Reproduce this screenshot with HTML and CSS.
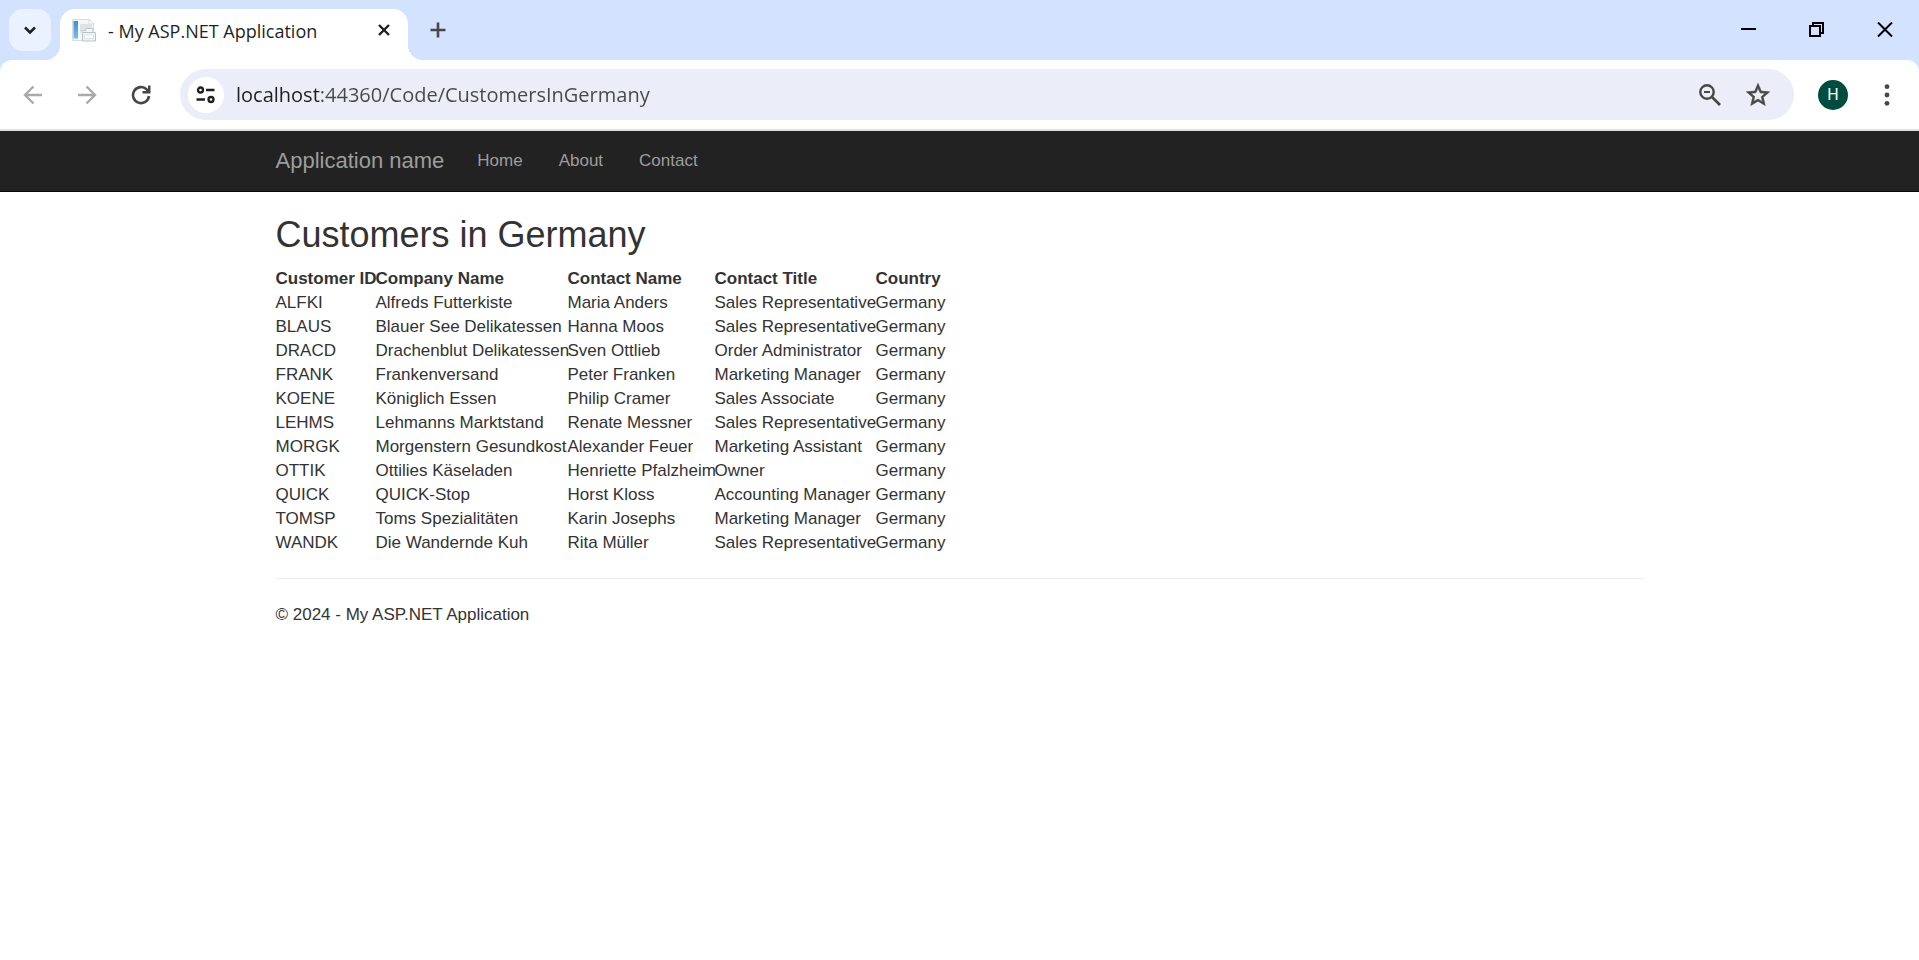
FILE: index.html
```html
<!DOCTYPE html>
<html lang="en">
<head>
<meta charset="utf-8">
<title>- My ASP.NET Application</title>
<link rel="stylesheet" href="styles.css">
</head>
<body>
<div class="browser">
  <div class="tab-strip">
    <button class="tab-search" aria-label="Search tabs">
      <svg width="14" height="14" viewBox="0 0 14 14"><path d="M2 4.500l5 5 5-5" fill="none" stroke="#1f1f1f" stroke-width="2.600"/></svg>
    </button>
    <div class="tab">
      <svg class="favicon" width="24" height="24" viewBox="0 0 24 24">
        <path d="M.5 1.500h16l5 5v16h-21z" fill="#f7f7f7" stroke="#d9dcdf"/>
        <path d="M17 1l5 5h-5z" fill="#fff" stroke="#cdd0d3" stroke-width=".8"/>
        <defs><linearGradient id="bar" x1="0" y1="0" x2="0" y2="1"><stop offset="0" stop-color="#3b8fd0"/><stop offset="1" stop-color="#72c0ea"/></linearGradient></defs>
        <path d="M1.500 3h4.500v17.500h-4.500z" fill="url(#bar)"/>
        <path d="M8 6h12v9h-12z" fill="#dfe3e6"/>
        <path d="M9.500 12.500h4.500v-2h7v7" fill="#f4f6f8" stroke="#c3c9ce"/>
        <path d="M10.500 14.500h13v8.500h-13z" fill="#f1f4f7" stroke="#b9c3cc"/>
        <path d="M12.500 17h9v3.500h-9z" fill="#fff" stroke="#d0d7dd" stroke-width=".7"/>
      </svg>
      <span class="tab-title">- My ASP.NET Application</span>
      <button class="icon-button tab-close" aria-label="Close tab">
        <svg width="14" height="14" viewBox="0 0 14 14"><path d="M2 2l10 10M12 2L2 12" stroke="#1f1f1f" stroke-width="2.400"/></svg>
      </button>
    </div>
    <button class="icon-button new-tab" aria-label="New tab">
      <svg width="16" height="16" viewBox="0 0 16 16"><path d="M8 0.500v15M.5 8h15" stroke="#474747" stroke-width="2.600"/></svg>
    </button>
    <div class="window-controls">
      <button class="icon-button" aria-label="Minimize"><svg width="16" height="16" viewBox="0 0 16 16"><path d="M0 6h15v2H0z"/></svg></button>
      <button class="icon-button" aria-label="Restore"><svg width="16" height="16" viewBox="0 0 16 16"><path d="M1 4h10v10H1zM4 4V1h10v10h-3" fill="none" stroke="#000" stroke-width="2"/></svg></button>
      <button class="icon-button" aria-label="Close"><svg width="16" height="16" viewBox="0 0 16 16"><path d="M1 .5l14 14M15 .5L1 14.500" stroke="#000" stroke-width="2"/></svg></button>
    </div>
  </div>
  <div class="toolbar">
    <div class="nav-buttons">
      <button class="icon-button" aria-label="Back"><svg width="20" height="20" viewBox="0 0 20 20"><path d="M19 10H3M10.500 1.500L2 10l8.500 8.500" fill="none" stroke="#aaa" stroke-width="2.400"/></svg></button>
      <button class="icon-button" aria-label="Forward"><svg width="20" height="20" viewBox="0 0 20 20"><path d="M1 10h16M9.500 1.500L18 10l-8.500 8.500" fill="none" stroke="#aaa" stroke-width="2.400"/></svg></button>
      <button class="icon-button" aria-label="Reload"><svg width="20" height="20" viewBox="0 0 20 20"><path d="M18 11A8 8 0 1 1 15.700 4.400L17.500 6.500" fill="none" stroke="#474747" stroke-width="2.600"/><path d="M19.500 0.500v8h-8V6h5.500V.5z" fill="#474747"/></svg></button>
    </div>
    <div class="omnibox">
      <button class="site-info" aria-label="View site information">
        <svg width="20" height="20" viewBox="0 0 20 20" fill="none" stroke="#1f1f1f" stroke-width="2.300"><circle cx="4.500" cy="5" r="2.500"/><path d="M10 5h8.500M.5 14.500h8.500"/><circle cx="15" cy="14.500" r="2.500"/></svg>
      </button>
      <input class="address" type="text" aria-label="Address and search bar" value="localhost:44360/Code/CustomersInGermany">
      <button class="icon-button omnibox-action" aria-label="Zoom"><svg width="24" height="24" viewBox="0 0 24 24" fill="none" stroke="#474747"><circle cx="9" cy="9" r="6.700" stroke-width="2.400"/><path d="M6 9h6" stroke-width="2"/><path d="M14 14l8 8" stroke-width="2.700"/></svg></button>
      <button class="icon-button omnibox-action" aria-label="Bookmark this tab"><svg width="28" height="28" viewBox="0 0 24 24" fill="#474747" stroke="#474747" stroke-width=".5"><path d="M22 9.240l-7.190-.62L12 2 9.190 8.630 2 9.240l5.460 4.730L5.820 21 12 17.270 18.180 21l-1.630-7.030L22 9.240zM12 15.400l-3.760 2.270 1-4.280-3.320-2.880 4.380-.38L12 6.100l1.710 4.040 4.380.38-3.320 2.880 1 4.280L12 15.400z"/></svg></button>
    </div>
    <button class="avatar" aria-label="Profile">H</button>
    <button class="icon-button menu" aria-label="Menu"><svg width="6" height="22" viewBox="0 0 6 22" fill="#474747"><circle cx="3" cy="2.700" r="2.400"/><circle cx="3" cy="11" r="2.400"/><circle cx="3" cy="19.300" r="2.400"/></svg></button>
  </div>
</div>
<nav class="navbar">
  <div class="container navbar-inner">
    <a class="brand" href="#">Application name</a>
    <a class="nav-link" href="#">Home</a>
    <a class="nav-link" href="#">About</a>
    <a class="nav-link" href="#">Contact</a>
  </div>
</nav>
<main class="container">
  <h2>Customers in Germany</h2>
  <table class="customers">
    <colgroup><col class="col-id"><col class="col-company"><col class="col-contact"><col class="col-title"><col class="col-country"></colgroup>
    <thead><tr><th>Customer ID</th><th>Company Name</th><th>Contact Name</th><th>Contact Title</th><th>Country</th></tr></thead>
    <tbody>
      <tr><td>ALFKI</td><td>Alfreds Futterkiste</td><td>Maria Anders</td><td>Sales Representative</td><td>Germany</td></tr>
      <tr><td>BLAUS</td><td>Blauer See Delikatessen</td><td>Hanna Moos</td><td>Sales Representative</td><td>Germany</td></tr>
      <tr><td>DRACD</td><td>Drachenblut Delikatessen</td><td>Sven Ottlieb</td><td>Order Administrator</td><td>Germany</td></tr>
      <tr><td>FRANK</td><td>Frankenversand</td><td>Peter Franken</td><td>Marketing Manager</td><td>Germany</td></tr>
      <tr><td>KOENE</td><td>Königlich Essen</td><td>Philip Cramer</td><td>Sales Associate</td><td>Germany</td></tr>
      <tr><td>LEHMS</td><td>Lehmanns Marktstand</td><td>Renate Messner</td><td>Sales Representative</td><td>Germany</td></tr>
      <tr><td>MORGK</td><td>Morgenstern Gesundkost</td><td>Alexander Feuer</td><td>Marketing Assistant</td><td>Germany</td></tr>
      <tr><td>OTTIK</td><td>Ottilies Käseladen</td><td>Henriette Pfalzheim</td><td>Owner</td><td>Germany</td></tr>
      <tr><td>QUICK</td><td>QUICK-Stop</td><td>Horst Kloss</td><td>Accounting Manager</td><td>Germany</td></tr>
      <tr><td>TOMSP</td><td>Toms Spezialitäten</td><td>Karin Josephs</td><td>Marketing Manager</td><td>Germany</td></tr>
      <tr><td>WANDK</td><td>Die Wandernde Kuh</td><td>Rita Müller</td><td>Sales Representative</td><td>Germany</td></tr>
    </tbody>
  </table>
  <hr>
  <footer><p>© 2024 - My ASP.NET Application</p></footer>
</main>
</body>
</html>
```
FILE: styles.css
```css
* { box-sizing: border-box; }
body {
  margin: 0;
  background: #fff;
  color: #333;
  font: 17px/24px "Liberation Sans", Arial, sans-serif;
}
button { border: 0; padding: 0; background: none; font: inherit; cursor: pointer; }
svg { display: block; }

.browser { background: #d3e2fe; font-family: "Open Sans", "Noto Sans", sans-serif; }
.icon-button { display: flex; align-items: center; justify-content: center; }

.tab-strip { display: flex; height: 60px; padding-left: 9px; }
.tab-search {
  display: flex; align-items: center; justify-content: center;
  width: 42px; height: 42px; margin: 9px 9px 0 0;
  border-radius: 14px; background: #ebf2ff;
}
.tab {
  position: relative;
  display: flex; align-items: center;
  width: 348px; margin-top: 9px; padding: 0 15px 9px 12px;
  border-radius: 15px 15px 0 0; background: #fff;
}
.tab::before, .tab::after {
  content: ""; position: absolute; bottom: 0; width: 15px; height: 15px;
}
.tab::before { left: -15px; background: radial-gradient(circle at 0 0, transparent 15px, #fff 15px); }
.tab::after { right: -15px; background: radial-gradient(circle at 100% 0, transparent 15px, #fff 15px); }
.favicon { flex: none; margin-right: 12px; }
.tab-title { flex: 1; padding-top: 2px; color: #1f1f1f; font-size: 18px; white-space: nowrap; }
.tab-close { width: 18px; height: 18px; }
.new-tab { width: 60px; }
.window-controls { display: flex; margin-left: auto; }
.window-controls .icon-button { width: 68px; }

.toolbar {
  display: flex; align-items: center;
  height: 71px; padding: 0 20px 0 6px;
  border-bottom: 2px solid #dfe1e0;
  border-radius: 12px 12px 0 0; background: #fff;
}
.nav-buttons { display: flex; width: 174px; }
.nav-buttons .icon-button { width: 54px; height: 36px; }
.omnibox {
  flex: 1; display: flex; align-items: center;
  height: 51px; padding: 0 12px 0 8px;
  border-radius: 26px; background: #ebeef8;
}
.site-info {
  display: flex; align-items: center; justify-content: center;
  width: 36px; height: 36px; margin-right: 12px;
  border-radius: 50%; background: #fff;
}
.address {
  flex: 1; min-width: 0; padding: 0; border: 0; outline: 0;
  background: linear-gradient(90deg, #1f1f1f 84px, #474747 84px);
  background-clip: text; -webkit-background-clip: text;
  color: transparent; font: 20px/30px "Open Sans", "Noto Sans", sans-serif;
}
.omnibox-action { width: 48px; height: 36px; }
.avatar {
  width: 30px; height: 30px; margin-left: 24px;
  border-radius: 50%; background: #004d40; color: #fff;
  font: 16px/30px Roboto, sans-serif;
}
.menu { width: 24px; height: 36px; margin-left: 27px; }

.container { width: 100%; max-width: 1404px; margin: 0 auto; padding: 0 18px; }
.navbar { background: #222; border-bottom: 1px solid #080808; }
.navbar-inner { display: flex; align-items: center; height: 60px; }
.navbar a { color: #9d9d9d; text-decoration: none; }
.navbar .brand { margin-right: 15px; font-size: 22px; }
.nav-link { padding: 0 18px; }

h2 { margin: 23px 0 13px; color: #333; font-size: 36px; font-weight: 400; line-height: 39px; }
.customers { width: 670px; table-layout: fixed; border-collapse: collapse; white-space: nowrap; }
.customers th, .customers td { padding: 0; text-align: left; }
.col-id { width: 100px; }
.col-company { width: 192px; }
.col-contact { width: 147px; }
.col-title { width: 161px; }
.col-country { width: 70px; }
hr { margin: 23px 0 24px; border: 0; border-top: 1px solid #eee; }
footer p { margin: 0 0 12px; }
```
